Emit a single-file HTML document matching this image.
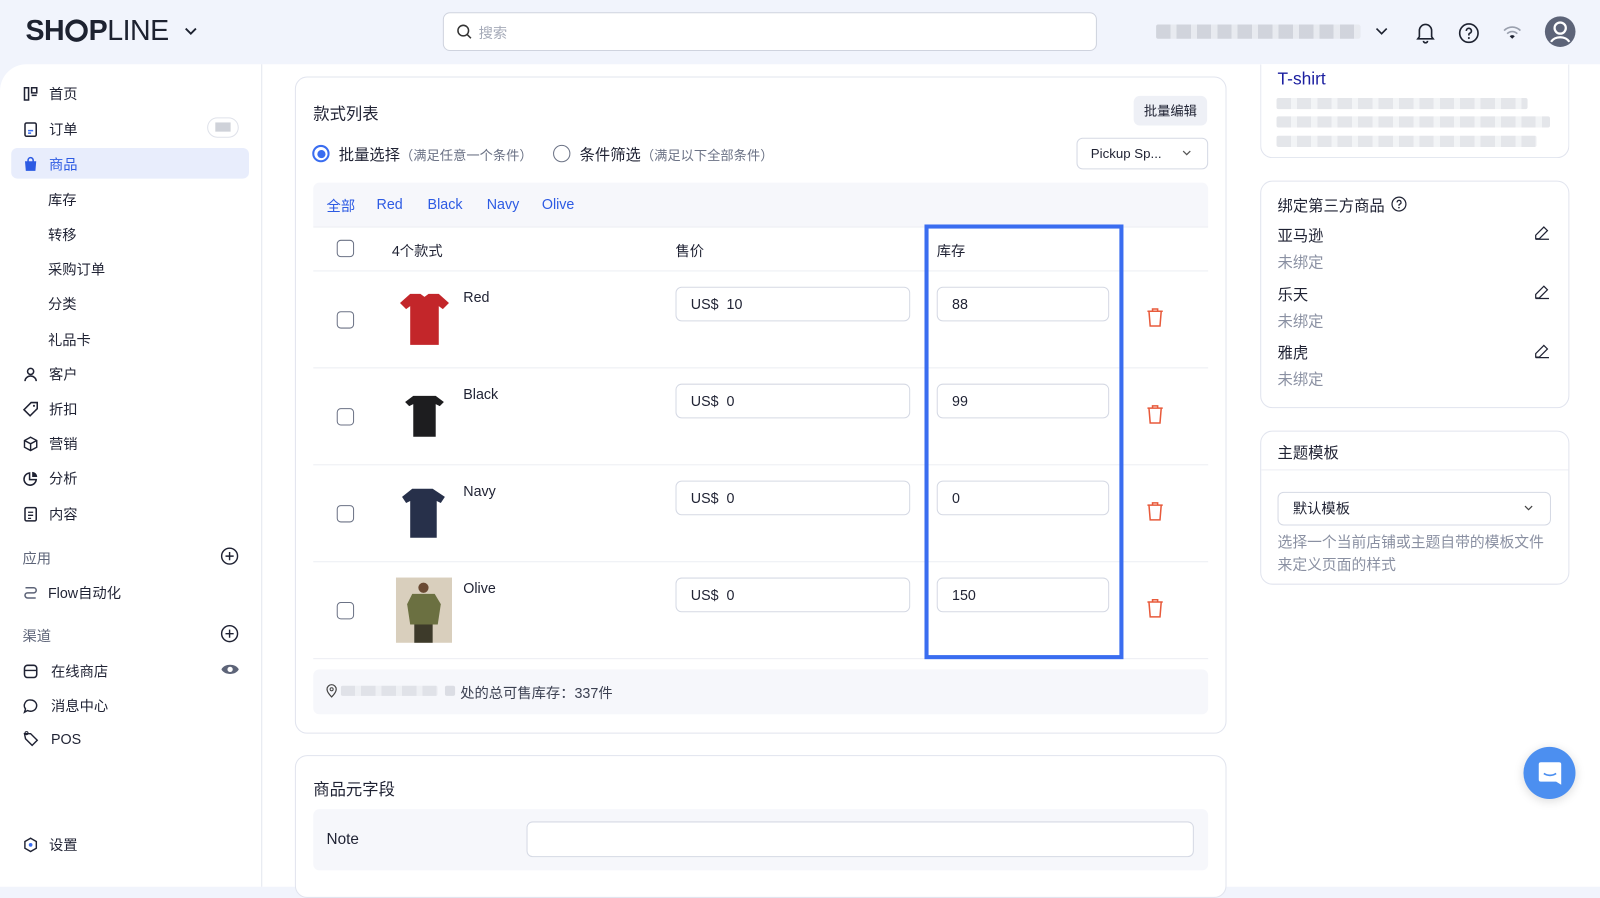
<!DOCTYPE html>
<html><head><meta charset="utf-8"><style>
*{box-sizing:border-box;margin:0;padding:0}
body{width:1600px;height:869px;overflow:hidden;background:#f1f4fc;font-family:"Liberation Sans","Noto Sans CJK SC",sans-serif;color:#1f2233;font-size:14px;position:relative}
#w{position:absolute;left:0;top:0;width:1568px;height:852px;transform:scale(1.0204);transform-origin:0 0}
.a{position:absolute}
.panel{position:absolute;left:0;top:63px;width:1600px;height:806px;background:#fff;border-radius:26px 26px 0 0}
.side{position:absolute;left:0;top:63px;width:257px;height:806px;border-right:1px solid #e3e6ee}
.nav{position:absolute;left:22px;font-size:14px;color:#1f2233;display:flex;align-items:center;gap:10px}
.nav svg{width:16px;height:16px}
.sub{position:absolute;left:47px;font-size:14px;color:#1f2233}
.card{position:absolute;background:#fff;border:1.5px solid #e1e4ee;border-radius:12px}
.inp{position:absolute;border:1px solid #d5d9e4;border-radius:6px;height:34px;background:#fff;font-size:14px;padding:0 14px;line-height:32px}
.cb{position:absolute;width:17px;height:17px;border:1.6px solid #6b7285;border-radius:4px}
.hl{position:absolute;left:307px;width:877px;height:1px;background:#eceef3}
.gray{color:#8a90a2}
.blur{position:absolute;background:repeating-linear-gradient(90deg,#c9ccd4 0 14px,#e6e8ec 14px 20px);border-radius:2px;opacity:.8}
</style></head><body><div id="w">
<div class="panel"></div>
<div class="side"></div>
<!-- header -->
<div class="a" style="left:25px;top:14px;font-size:28px;font-weight:700;letter-spacing:-0.5px;color:#1d2230">SH<span style="display:inline-block;width:22px;height:22px;border:4px solid #1d2230;border-radius:50%;vertical-align:-2px;margin:0 1px"></span>P<span style="font-weight:400">LINE</span></div>
<svg class="a" style="left:180px;top:25px" width="14" height="12" viewBox="0 0 14 12"><path d="M2 3l5 5 5-5" fill="none" stroke="#1d2230" stroke-width="1.8"/></svg>
<div class="a" style="left:434px;top:12px;width:641px;height:38px;background:#fff;border:1px solid #cfd3de;border-radius:7px"></div>
<svg class="a" style="left:447px;top:23px" width="16" height="16" viewBox="0 0 16 16"><circle cx="7" cy="7" r="5.2" fill="none" stroke="#333" stroke-width="1.5"/><path d="M11 11l3.5 3.5" stroke="#333" stroke-width="1.5"/></svg>
<div class="a gray" style="left:469px;top:22px;color:#a5aab8">搜索</div>
<div class="blur" style="left:1133px;top:24px;width:200px;height:14px"></div>
<svg class="a" style="left:1347px;top:25px" width="14" height="12" viewBox="0 0 14 12"><path d="M2 3l5 5 5-5" fill="none" stroke="#1d2230" stroke-width="1.6"/></svg>
<svg class="a" style="left:1387px;top:21px" width="20" height="22" viewBox="0 0 20 22"><path d="M4 15V9a6 6 0 0 1 12 0v6l1.5 2h-15zM8 19a2 2 0 0 0 4 0" fill="none" stroke="#1d2230" stroke-width="1.6"/></svg>
<svg class="a" style="left:1429px;top:22px" width="21" height="21" viewBox="0 0 21 21"><circle cx="10.5" cy="10.5" r="9" fill="none" stroke="#1d2230" stroke-width="1.6"/><path d="M8 8.3a2.5 2.5 0 1 1 3.3 2.3c-.6.3-.8.7-.8 1.5v.7" fill="none" stroke="#1d2230" stroke-width="1.6"/><circle cx="10.5" cy="15.3" r="1" fill="#1d2230"/></svg>
<svg class="a" style="left:1472px;top:24px" width="20" height="16" viewBox="0 0 20 16"><path d="M2 6a11 11 0 0 1 16 0M5 9a7 7 0 0 1 10 0" fill="none" stroke="#9aa0ae" stroke-width="1.6"/><path d="M7.5 11.5a3.5 3.5 0 0 1 5 0L10 14z" fill="#1d2230"/></svg>
<svg class="a" style="left:1513px;top:15px" width="32" height="32" viewBox="0 0 32 32"><circle cx="16" cy="16" r="15" fill="#5d6478"/><circle cx="16" cy="12.5" r="5.5" fill="none" stroke="#fff" stroke-width="2.2"/><path d="M7 26a10 8 0 0 1 18 0" fill="none" stroke="#fff" stroke-width="2.2"/></svg>

<!-- sidebar -->
<div class="a" style="left:11px;top:145px;width:233px;height:30px;background:#e8edfc;border-radius:6px"></div>
<div class="nav" style="top:82px"><svg viewBox="0 0 16 16"><path d="M2 2h4v12H2zM9 2h5v5H9zM9 9.5h5" fill="none" stroke="#1f2233" stroke-width="1.5"/></svg>首页</div>
<div class="nav" style="top:117px"><svg viewBox="0 0 16 16"><rect x="2.5" y="1.5" width="11" height="13" rx="1.5" fill="none" stroke="#1f2233" stroke-width="1.5"/><path d="M5.5 9h5M5.5 11.5h3" stroke="#3a6df0" stroke-width="1.5"/></svg>订单</div>
<div class="a" style="left:203px;top:115px;width:31px;height:20px;border:1.5px solid #dfe2ea;border-radius:10px;background:#fff"><div style="margin:4px 7px;width:15px;height:9px;background:#cfd2d9"></div></div>
<div class="nav" style="top:151px;color:#2d5be3"><svg viewBox="0 0 16 16"><path d="M2.5 5h11l-.8 9.5H3.3z" fill="#2d5be3"/><path d="M5.5 6V4a2.5 2.5 0 0 1 5 0v2" fill="none" stroke="#2d5be3" stroke-width="1.5"/></svg>商品</div>
<div class="sub" style="top:186px">库存</div>
<div class="sub" style="top:220px">转移</div>
<div class="sub" style="top:254px">采购订单</div>
<div class="sub" style="top:288px">分类</div>
<div class="sub" style="top:323px">礼品卡</div>
<div class="nav" style="top:357px"><svg viewBox="0 0 16 16"><circle cx="8" cy="5" r="3" fill="none" stroke="#1f2233" stroke-width="1.5"/><path d="M2.5 14.5a5.5 5 0 0 1 11 0" fill="none" stroke="#1f2233" stroke-width="1.5"/></svg>客户</div>
<div class="nav" style="top:391px"><svg viewBox="0 0 16 16"><path d="M8.5 1.5h6v6L7.5 14.5l-6-6z" fill="none" stroke="#1f2233" stroke-width="1.5"/><circle cx="11.3" cy="4.7" r="1" fill="#1f2233"/></svg>折扣</div>
<div class="nav" style="top:425px"><svg viewBox="0 0 16 16"><path d="M8 1.5l6 3.2v6.6L8 14.5l-6-3.2V4.7zM2 4.7l6 3.2 6-3.2M8 8v6.5" fill="none" stroke="#1f2233" stroke-width="1.4"/></svg>营销</div>
<div class="nav" style="top:459px"><svg viewBox="0 0 16 16"><path d="M7 2.5a6 6 0 1 0 6.5 6.5H7z" fill="none" stroke="#1f2233" stroke-width="1.5"/><path d="M9.5 1.5a5 5 0 0 1 5 5h-5z" fill="#1f2233"/></svg>分析</div>
<div class="nav" style="top:494px"><svg viewBox="0 0 16 16"><rect x="2.5" y="1.5" width="11" height="13" rx="1.5" fill="none" stroke="#1f2233" stroke-width="1.5"/><path d="M5.5 6h5M5.5 9h5M5.5 12h3" stroke="#1f2233" stroke-width="1.3"/></svg>内容</div>
<div class="a" style="left:22px;top:537px;color:#5d6478">应用</div>
<svg class="a" style="left:216px;top:536px" width="18" height="18" viewBox="0 0 18 18"><circle cx="9" cy="9" r="7.8" fill="none" stroke="#1f2233" stroke-width="1.4"/><path d="M9 5v8M5 9h8" stroke="#1f2233" stroke-width="1.4"/></svg>
<div class="nav" style="top:571px;gap:9px"><svg viewBox="0 0 16 16"><path d="M3 3h8a2.5 2.5 0 0 1 0 5H5a2.5 2.5 0 0 0 0 5h8" fill="none" stroke="#5d6478" stroke-width="1.5"/></svg>Flow自动化</div>
<div class="a" style="left:22px;top:613px;color:#5d6478">渠道</div>
<svg class="a" style="left:216px;top:612px" width="18" height="18" viewBox="0 0 18 18"><circle cx="9" cy="9" r="7.8" fill="none" stroke="#1f2233" stroke-width="1.4"/><path d="M9 5v8M5 9h8" stroke="#1f2233" stroke-width="1.4"/></svg>
<div class="nav" style="top:648px;gap:12px"><svg viewBox="0 0 16 16"><rect x="2" y="2" width="12" height="12" rx="3" fill="none" stroke="#1f2233" stroke-width="1.5"/><path d="M2 7h12" stroke="#1f2233" stroke-width="1.3"/></svg>在线商店</div>
<svg class="a" style="left:216px;top:649px" width="19" height="14" viewBox="0 0 19 14"><path d="M1 7c3-6 14-6 17 0-3 6-14 6-17 0z" fill="#5d6478"/><circle cx="9.5" cy="7" r="2.6" fill="#fff"/></svg>
<div class="nav" style="top:682px;gap:12px"><svg viewBox="0 0 16 16"><path d="M8 2a6 5.5 0 1 1-3 10.3L2 14l1-3.2A5.5 5.5 0 0 1 8 2z" fill="none" stroke="#1f2233" stroke-width="1.4"/></svg>消息中心</div>
<div class="nav" style="top:716px;gap:12px"><svg viewBox="0 0 16 16"><path d="M2 3l6 0 6.5 6.5-5 5L3 8z" fill="none" stroke="#1f2233" stroke-width="1.4"/><circle cx="4" cy="2.5" r="1.5" fill="none" stroke="#1f2233"/></svg>POS</div>
<div class="nav" style="top:818px"><svg viewBox="0 0 16 16"><path d="M8 1.5l5.6 3.2v6.6L8 14.5l-5.6-3.2V4.7z" fill="none" stroke="#1f2233" stroke-width="1.4"/><circle cx="8" cy="8" r="1.8" fill="#3a6df0"/></svg>设置</div>

<!-- main card -->
<div class="card" style="left:289px;top:75px;width:913px;height:644px"></div>
<div class="a" style="left:307px;top:98px;font-size:16px">款式列表</div>
<div class="a" style="left:1111px;top:94px;width:72px;height:29px;background:#eef0f6;border-radius:6px;font-size:13px;text-align:center;line-height:29px">批量编辑</div>
<div class="a" style="left:306px;top:142px;width:17px;height:17px;border:2px solid #3a6df0;border-radius:50%"><div style="margin:2.5px;width:8px;height:8px;background:#3a6df0;border-radius:50%"></div></div>
<div class="a" style="left:332px;top:141px;font-size:15px">批量选择<span style="font-size:13px;color:#6b7285">（满足任意一个条件）</span></div>
<div class="a" style="left:542px;top:142px;width:17px;height:17px;border:1.6px solid #6b7285;border-radius:50%"></div>
<div class="a" style="left:568px;top:141px;font-size:15px">条件筛选<span style="font-size:13px;color:#6b7285">（满足以下全部条件）</span></div>
<div class="a" style="left:1055px;top:135px;width:129px;height:31px;border:1px solid #d5d9e4;border-radius:6px;font-size:13px;padding-left:13px;line-height:29px">Pickup Sp...</div>
<svg class="a" style="left:1158px;top:146px" width="10" height="8" viewBox="0 0 10 8"><path d="M1.5 2l3.5 3.5L8.5 2" fill="none" stroke="#555" stroke-width="1.2"/></svg>
<div class="a" style="left:307px;top:179px;width:877px;height:43px;background:#f6f7fb;border-radius:6px 6px 0 0"></div>
<div class="a" style="left:320px;top:192px;color:#2d5be3">全部</div>
<div class="a" style="left:369px;top:192px;color:#2d5be3">Red</div>
<div class="a" style="left:419px;top:192px;color:#2d5be3">Black</div>
<div class="a" style="left:477px;top:192px;color:#2d5be3">Navy</div>
<div class="a" style="left:531px;top:192px;color:#2d5be3">Olive</div>
<div class="hl" style="top:222px"></div>
<div class="cb" style="left:330px;top:235px"></div>
<div class="a" style="left:384px;top:236px">4个款式</div>
<div class="a" style="left:662px;top:236px">售价</div>
<div class="a" style="left:918px;top:236px">库存</div>
<div class="hl" style="top:265px"></div>
<div class="hl" style="top:360px"></div>
<div class="hl" style="top:455px"></div>
<div class="hl" style="top:550px"></div>
<div class="hl" style="top:645px"></div>

<!-- rows -->
<div class="cb" style="left:330px;top:305px"></div>
<svg class="a" style="left:390px;top:284px" width="52" height="56" viewBox="0 0 52 56"><path d="M12 4h10l4 3 4-3h10l10 9-6 6-4-3v38H12V16l-4 3-6-6z" fill="#c3262a"/></svg>
<div class="a" style="left:454px;top:283px">Red</div>
<div class="inp" style="left:662px;top:281px;width:230px">US$&nbsp; 10</div>
<div class="inp" style="left:918px;top:281px;width:169px">88</div>

<div class="cb" style="left:330px;top:400px"></div>
<svg class="a" style="left:395px;top:386px" width="42" height="46" viewBox="0 0 42 46"><path d="M10 2h22l8 6-4 4-4-2v32H10V10l-4 2-4-4z" fill="#1d1d1f"/></svg>
<div class="a" style="left:454px;top:378px">Black</div>
<div class="inp" style="left:662px;top:376px;width:230px">US$&nbsp; 0</div>
<div class="inp" style="left:918px;top:376px;width:169px">99</div>

<div class="cb" style="left:330px;top:495px"></div>
<svg class="a" style="left:392px;top:477px" width="46" height="52" viewBox="0 0 46 52"><path d="M12 2h20l12 8-4 6-4-2v36H10V14l-4 2-4-6z" fill="#27304a"/></svg>
<div class="a" style="left:454px;top:473px">Navy</div>
<div class="inp" style="left:662px;top:471px;width:230px">US$&nbsp; 0</div>
<div class="inp" style="left:918px;top:471px;width:169px">0</div>

<div class="cb" style="left:330px;top:590px"></div>
<svg class="a" style="left:388px;top:566px" width="55" height="64" viewBox="0 0 55 64"><rect width="55" height="64" fill="#d9cfbd"/><circle cx="27" cy="10" r="5" fill="#6a4a33"/><path d="M16 16h22l6 10-3 20H14l-3-20z" fill="#6b7041"/><rect x="18" y="46" width="18" height="18" fill="#3d3a2a"/></svg>
<div class="a" style="left:454px;top:568px">Olive</div>
<div class="inp" style="left:662px;top:566px;width:230px">US$&nbsp; 0</div>
<div class="inp" style="left:918px;top:566px;width:169px">150</div>

<svg class="a" style="left:1123px;top:301px" width="18" height="20" viewBox="0 0 18 20"><path d="M1.5 4h15M6.5 4V1.8h5V4M3 4l1.2 14.5h9.6L15 4" fill="none" stroke="#e85a3b" stroke-width="1.5"/></svg>
<svg class="a" style="left:1123px;top:396px" width="18" height="20" viewBox="0 0 18 20"><path d="M1.5 4h15M6.5 4V1.8h5V4M3 4l1.2 14.5h9.6L15 4" fill="none" stroke="#e85a3b" stroke-width="1.5"/></svg>
<svg class="a" style="left:1123px;top:491px" width="18" height="20" viewBox="0 0 18 20"><path d="M1.5 4h15M6.5 4V1.8h5V4M3 4l1.2 14.5h9.6L15 4" fill="none" stroke="#e85a3b" stroke-width="1.5"/></svg>
<svg class="a" style="left:1123px;top:586px" width="18" height="20" viewBox="0 0 18 20"><path d="M1.5 4h15M6.5 4V1.8h5V4M3 4l1.2 14.5h9.6L15 4" fill="none" stroke="#e85a3b" stroke-width="1.5"/></svg>

<div class="a" style="left:906px;top:220px;width:195px;height:426px;border:4px solid #3a6df0"></div>

<div class="a" style="left:307px;top:656px;width:877px;height:44px;background:#f6f7fb;border-radius:6px"></div>
<svg class="a" style="left:319px;top:670px" width="12" height="14" viewBox="0 0 12 14"><path d="M6 13s4.5-4.5 4.5-7.5a4.5 4.5 0 0 0-9 0C1.5 8.5 6 13 6 13z" fill="none" stroke="#444" stroke-width="1.2"/><circle cx="6" cy="5.5" r="1.5" fill="none" stroke="#444"/></svg>
<div class="blur" style="left:334px;top:672px;width:95px;height:10px;opacity:.5"></div>
<div class="blur" style="left:436px;top:672px;width:10px;height:10px;opacity:.6"></div>
<div class="a" style="left:451px;top:669px;color:#3c4152">处的总可售库存：337件</div>

<div class="card" style="left:289px;top:740px;width:913px;height:140px"></div>
<div class="a" style="left:307px;top:760px;font-size:16px">商品元字段</div>
<div class="a" style="left:307px;top:793px;width:877px;height:60px;background:#f6f7fb;border-radius:6px"></div>
<div class="a" style="left:320px;top:814px;font-size:15px">Note</div>
<div class="inp" style="left:516px;top:805px;width:654px;height:35px"></div>

<!-- right column -->
<div class="card" style="left:1235px;top:63px;width:303px;height:92px;border-top:none;border-radius:0 0 12px 12px"></div>
<div class="a" style="left:1252px;top:68px;font-size:17px;color:#1b1fa0">T-shirt</div>
<div class="blur" style="left:1251px;top:96px;width:246px;height:11px;opacity:.5"></div>
<div class="blur" style="left:1251px;top:114px;width:268px;height:11px;opacity:.5"></div>
<div class="blur" style="left:1251px;top:133px;width:255px;height:11px;opacity:.5"></div>

<div class="card" style="left:1235px;top:177px;width:303px;height:223px"></div>
<div class="a" style="left:1252px;top:191px;font-size:15px">绑定第三方商品</div>
<svg class="a" style="left:1363px;top:192px" width="16" height="16" viewBox="0 0 16 16"><circle cx="8" cy="8" r="6.8" fill="none" stroke="#1f2233" stroke-width="1.2"/><path d="M6.2 6.3a1.9 1.9 0 1 1 2.5 1.8c-.5.2-.7.5-.7 1.1v.4" fill="none" stroke="#1f2233" stroke-width="1.2"/><circle cx="8" cy="11.5" r=".8" fill="#1f2233"/></svg>
<div class="a" style="left:1252px;top:220px;font-size:15px">亚马逊</div>
<div class="a" style="left:1252px;top:246px;color:#8a90a2;font-size:15px">未绑定</div>
<div class="a" style="left:1252px;top:278px;font-size:15px">乐天</div>
<div class="a" style="left:1252px;top:304px;color:#8a90a2;font-size:15px">未绑定</div>
<div class="a" style="left:1252px;top:335px;font-size:15px">雅虎</div>
<div class="a" style="left:1252px;top:361px;color:#8a90a2;font-size:15px">未绑定</div>
<svg class="a" style="left:1503px;top:220px" width="16" height="16" viewBox="0 0 16 16"><path d="M10 2.5l3.5 3.5-8 8H2v-3.5zM2 14.5h13" fill="none" stroke="#1f2233" stroke-width="1.2"/></svg>
<svg class="a" style="left:1503px;top:278px" width="16" height="16" viewBox="0 0 16 16"><path d="M10 2.5l3.5 3.5-8 8H2v-3.5zM2 14.5h13" fill="none" stroke="#1f2233" stroke-width="1.2"/></svg>
<svg class="a" style="left:1503px;top:336px" width="16" height="16" viewBox="0 0 16 16"><path d="M10 2.5l3.5 3.5-8 8H2v-3.5zM2 14.5h13" fill="none" stroke="#1f2233" stroke-width="1.2"/></svg>

<div class="card" style="left:1235px;top:422px;width:303px;height:151px"></div>
<div class="a" style="left:1252px;top:433px;font-size:15px">主题模板</div>
<div class="a" style="left:1236px;top:460px;width:301px;height:1px;background:#eceef3"></div>
<div class="inp" style="left:1252px;top:482px;width:268px;height:33px;font-size:14px;line-height:31px">默认模板</div>
<svg class="a" style="left:1493px;top:494px" width="10" height="8" viewBox="0 0 10 8"><path d="M1.5 2l3.5 3.5L8.5 2" fill="none" stroke="#444" stroke-width="1.2"/></svg>
<div class="a" style="left:1252px;top:521px;width:262px;font-size:14.5px;line-height:22px;color:#8a90a2">选择一个当前店铺或主题自带的模板文件来定义页面的样式</div>

<div class="a" style="left:1493px;top:732px;width:51px;height:51px;background:#4c8ff0;border-radius:50%;box-shadow:0 2px 10px rgba(0,0,0,.15)"></div>
<svg class="a" style="left:1506px;top:745px" width="26" height="26" viewBox="0 0 26 26"><path d="M4 2h18a2 2 0 0 1 2 2v20l-5-3H4a2 2 0 0 1-2-2V4a2 2 0 0 1 2-2z" fill="#fff"/><path d="M7 13c3.5 2.5 8.5 2.5 12 0" fill="none" stroke="#4c8ff0" stroke-width="1.6"/></svg>
</div></body></html>
